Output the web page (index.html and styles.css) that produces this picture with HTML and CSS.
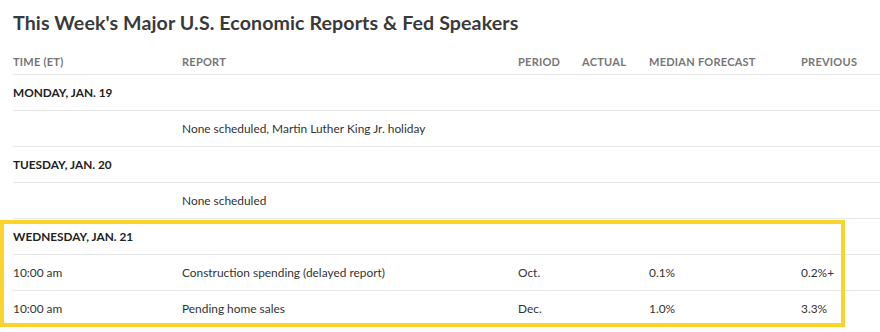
FILE: index.html
```html
<!DOCTYPE html>
<html lang="en">
<head>
<meta charset="utf-8">
<title>Economic Reports</title>
<link rel="stylesheet" href="styles.css">
</head>
<body>
<div class="page">
  <h1 class="title">This Week's Major U.S. Economic Reports &amp; Fed Speakers</h1>
  <div class="table">
    <div class="row head">
      <div>TIME (ET)</div><div>REPORT</div><div>PERIOD</div><div>ACTUAL</div><div>MEDIAN FORECAST</div><div>PREVIOUS</div>
    </div>
    <div class="row day"><div class="span">MONDAY, JAN. 19</div></div>
    <div class="row"><div></div><div>None scheduled, Martin Luther King Jr. holiday</div><div></div><div></div><div></div><div></div></div>
    <div class="row day"><div class="span">TUESDAY, JAN. 20</div></div>
    <div class="row"><div></div><div>None scheduled</div><div></div><div></div><div></div><div></div></div>
    <div class="row day"><div class="span">WEDNESDAY, JAN. 21</div></div>
    <div class="row"><div>10:00 am</div><div>Construction spending (delayed report)</div><div>Oct.</div><div></div><div>0.1%</div><div>0.2%+</div></div>
    <div class="row last"><div>10:00 am</div><div>Pending home sales</div><div>Dec.</div><div></div><div>1.0%</div><div>3.3%</div></div>
  </div>
  <div class="highlight"></div>
</div>
</body>
</html>
```
FILE: styles.css
```css
html, body {
  margin: 0;
  padding: 0;
  background: #ffffff;
}
.page {
  position: relative;
  width: 880px;
  height: 332px;
  overflow: hidden;
  padding-left: 13px;
  box-sizing: border-box;
  font-family: Lato, "Liberation Sans", sans-serif;
  color: #333333;
}
.title {
  margin: 0;
  padding-top: 11px;
  height: 37px;
  font-size: 19.6px;
  font-weight: 700;
  letter-spacing: 0.1px;
  color: #3a3a3a;
  line-height: 24px;
  white-space: nowrap;
}
.table {
  width: 880px;
}
.row {
  display: grid;
  grid-template-columns: 169px 336px 64px 67px 152px 1fr;
  height: 35px;
  align-items: center;
  border-bottom: 1px solid #e8e8e8;
  font-size: 11.9px;
  color: #333;
  white-space: nowrap;
}
.row.last {
  border-bottom: none;
}
.row.head {
  height: 26px;
  font-size: 11px;
  font-weight: 700;
  color: #767676;
  letter-spacing: 0.25px;
}
.row.day {
  display: flex;
  font-weight: 700;
  font-size: 11.8px;
  color: #222;
}
.highlight {
  position: absolute;
  left: 0;
  top: 220px;
  width: 845px;
  height: 107px;
  border: 4px solid #fcd22c;
  box-sizing: border-box;
  pointer-events: none;
}
```
